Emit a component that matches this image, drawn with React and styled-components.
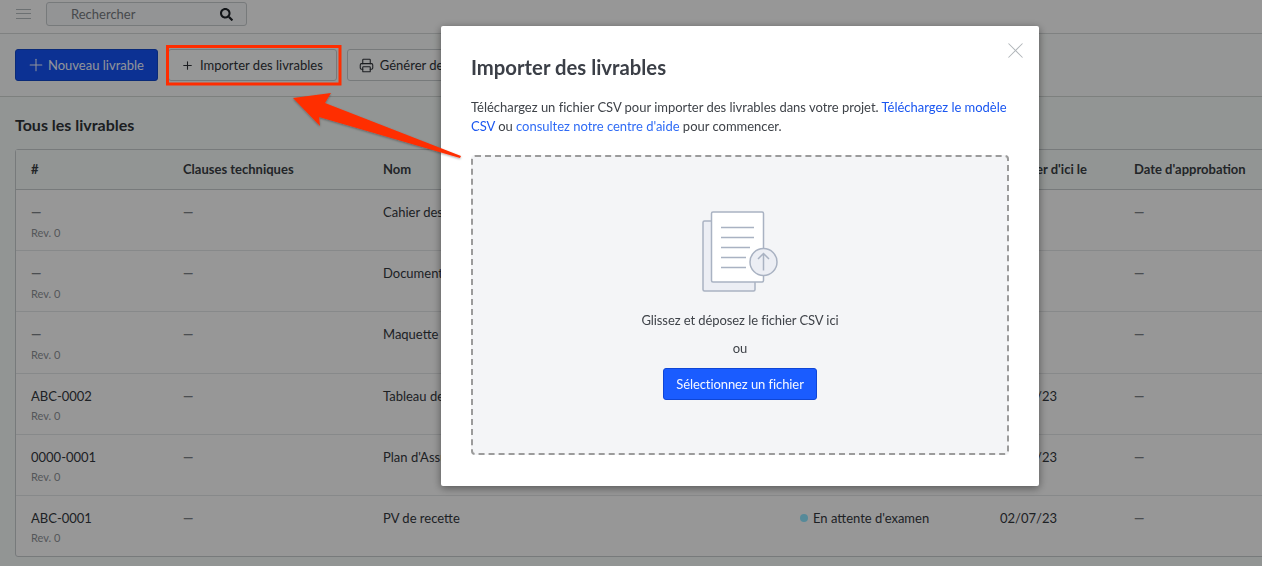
import styled, { createGlobalStyle } from "styled-components";
import { Plus, Printer, X } from "lucide-react";
import { FaSearch } from "react-icons/fa";

const GlobalStyle = createGlobalStyle`
    html, body {
        margin: 0;
        height: 100%;
        overflow: hidden;
        background: #f4f9f7;
    }
    * {
        box-sizing: border-box;
    }
    body {
        font-family: Lato, "Liberation Sans", sans-serif;
        font-size: 13px;
        color: #2f3338;
    }
`;

const Page = styled.div`
    height: 566px;
    overflow: hidden;
`;

const TopBar = styled.header`
    height: 34px;
    display: flex;
    align-items: flex-start;
    gap: 15px;
    padding: 2px 15px 0 16px;
    background: #fcfcfc;
    border-bottom: 1px solid #d4d8d8;
`;

const Burger = styled.div`
    width: 15px;
    height: 10px;
    margin-top: 7px;
    border-top: 1px solid #b5bbbf;
    border-bottom: 1px solid #b5bbbf;
    position: relative;
    &:before {
        content: "";
        position: absolute;
        left: 0;
        right: 0;
        top: 3px;
        border-top: 1px solid #b5bbbf;
    }
`;

const Search = styled.div`
    width: 201px;
    height: 24px;
    display: flex;
    align-items: center;
    justify-content: space-between;
    padding: 0 13px 0 24px;
    border: 1px solid #c6cbce;
    border-radius: 3px;
    background: #f6f7f8;
    color: #757a80;
    font-size: 13px;
    svg {
        color: #1f2328;
    }
`;

const Toolbar = styled.div`
    height: 63px;
    display: flex;
    align-items: center;
    padding: 0 15px;
    background: #f9fbfa;
    border-bottom: 1px solid #d0d5d3;
`;

const Button = styled.button`
    height: 32px;
    display: inline-flex;
    align-items: center;
    flex-shrink: 0;
    gap: ${(p) => p.$gap}px;
    margin-right: ${(p) => p.$after || 0}px;
    padding: 0 13px 0 ${(p) => p.$left}px;
    border-radius: 3px;
    border: 1px solid ${(p) => (p.$primary ? "#1246c9" : "#c6cbce")};
    background: ${(p) => (p.$primary ? "#1452f5" : "#fbfcfc")};
    color: ${(p) => (p.$primary ? "#f2f5ff" : "#2f3338")};
    font-family: inherit;
    font-size: 13px;
    white-space: nowrap;
`;

const Section = styled.section`
    padding: 0 0 0 15px;
`;

const Title = styled.h2`
    margin: 0;
    height: 52px;
    padding-top: 18px;
    font-size: 16px;
    line-height: 20px;
    font-weight: 700;
    color: #2f3338;
`;

const Table = styled.div`
    width: 1320px;
    border: 1px solid #c6cbce;
    border-radius: 3px;
    background: #fcfcfc;
`;

const Row = styled.div`
    display: grid;
    grid-template-columns: 152px 200px 417px 200px 134px 1fr;
    padding-left: 15px;
    height: 61.2px;
    align-items: start;
    border-bottom: 1px solid #e2e4e6;
    &:last-child {
        border-bottom: none;
        height: 60px;
    }
`;

const HeadRow = styled(Row)`
    height: 40px;
    padding-bottom: 2px;
    align-items: center;
    background: #f4f9f7;
    border-bottom-color: #c6cbce;
`;

const HeadCell = styled.div`
    font-weight: 700;
    color: #3a3e44;
    white-space: nowrap;
`;

const Cell = styled.div`
    padding-top: 14px;
    line-height: 16px;
    color: #33373c;
    white-space: nowrap;
`;

const Mark = styled.span`
    font-weight: 700;
    color: #7d8287;
`;

const Rev = styled.div`
    margin-top: 5.5px;
    font-size: 11px;
    line-height: 14px;
    color: #8d9196;
`;

const Status = styled(Cell)`
    display: flex;
    align-items: center;
    gap: 5px;
    &:before {
        content: "";
        width: 8px;
        height: 8px;
        border-radius: 50%;
        background: #90e6ff;
    }
`;

const Backdrop = styled.div`
    position: fixed;
    inset: 0;
    background: rgba(0, 0, 0, 0.4);
`;

const Modal = styled.div`
    position: fixed;
    left: 441px;
    top: 26px;
    width: 598px;
    height: 460px;
    padding: 29px 30px 30px;
    background: #fff;
    border-radius: 2px;
    box-shadow: 0 2px 8px rgba(0, 0, 0, 0.45);
`;

const Close = styled.button`
    position: absolute;
    top: 11px;
    right: 10px;
    padding: 0;
    border: none;
    background: none;
    color: #b0b5b9;
    display: flex;
`;

const ModalTitle = styled.h3`
    margin: 0 0 19px;
    font-size: 20.3px;
    line-height: 24px;
    font-weight: 700;
    color: #3b3f47;
`;

const Intro = styled.p`
    margin: 0 0 19px;
    font-size: 13px;
    line-height: 19px;
    letter-spacing: -0.02px;
    color: #3f4349;
`;

const Link = styled.a`
    color: ${(p) => (p.$light ? "#2f6bf5" : "#1a56f0")};
    text-decoration: none;
`;

const DropZone = styled.div`
    width: 538px;
    height: 300px;
    display: flex;
    flex-direction: column;
    align-items: center;
    padding-top: 54px;
    background: #f4f5f7;
    border: 2px dashed #9b9b9b;
    border-radius: 4px;
    color: #3f4349;
`;

const DropText = styled.div`
    line-height: 16px;
    letter-spacing: -0.08px;
    margin-top: ${(p) => p.$top}px;
`;

const Pick = styled.button`
    margin-top: 12px;
    width: 154px;
    height: 32px;
    border: 1px solid #0f46d6;
    border-radius: 3px;
    background: #1a5cff;
    color: #f4f7ff;
    font-family: inherit;
    font-size: 13px;
    letter-spacing: -0.08px;
`;

const Annotation = styled.svg`
    position: fixed;
    inset: 0;
    pointer-events: none;
`;

const DocIcon = () => (
    <svg width="80" height="84" viewBox="0 0 80 84" fill="none" stroke="#a9b2c2" strokeWidth="1.5">
        <rect x="3" y="10" width="52" height="70" rx="1.5" fill="#eceef4" />
        <rect x="11.5" y="1" width="52" height="70" rx="1.5" fill="#fff" />
        <path d="M21 16.5h33M21 26.5h33M21 36.5h29M21 46.5h25M21 56.5h25" />
        <circle cx="63.5" cy="51" r="13.5" fill="#eceef4" />
        <path d="M63.5 59.5V42.5M58 48l5.5-5.5 5.5 5.5" />
    </svg>
);

const rows = [
    { id: "", name: "Cahier des charges" },
    { id: "", name: "Document de conception" },
    { id: "", name: "Maquette fonctionnelle" },
    { id: "ABC-0002", name: "Tableau de bord", date: "02/07/23" },
    { id: "0000-0001", name: "Plan d'Assurance Qualité", date: "02/07/23" },
    { id: "ABC-0001", name: "PV de recette", date: "02/07/23" },
];

export default function App() {
    return (
        <Page>
            <GlobalStyle />
            <TopBar>
                <Burger />
                <Search>
                    Rechercher
                    <FaSearch size={13} />
                </Search>
            </TopBar>
            <Toolbar>
                <Button $primary $after={10} $left={10} $gap={2}>
                    <Plus size={20} strokeWidth={1.25} />
                    Nouveau livrable
                </Button>
                <Button $after={10} $left={12} $gap={6}>
                    <Plus size={13} strokeWidth={2} />
                    Importer des livrables
                </Button>
                <Button $left={11} $gap={6}>
                    <Printer size={15} strokeWidth={1.75} />
                    Générer des rapports
                </Button>
            </Toolbar>
            <Section>
                <Title>Tous les livrables</Title>
                <Table>
                    <HeadRow>
                        <HeadCell>#</HeadCell>
                        <HeadCell>Clauses techniques</HeadCell>
                        <HeadCell>Nom</HeadCell>
                        <HeadCell>Statut</HeadCell>
                        <HeadCell>À traiter d'ici le</HeadCell>
                        <HeadCell>Date d'approbation</HeadCell>
                    </HeadRow>
                    {rows.map((row, i) => (
                        <Row key={i}>
                            <Cell>
                                {row.id || <Mark>—</Mark>}
                                <Rev>Rev. 0</Rev>
                            </Cell>
                            <Cell><Mark>—</Mark></Cell>
                            <Cell>{row.name}</Cell>
                            <Status>En attente d'examen</Status>
                            <Cell>{row.date || <Mark>—</Mark>}</Cell>
                            <Cell><Mark>—</Mark></Cell>
                        </Row>
                    ))}
                </Table>
            </Section>
            <Backdrop />
            <Modal>
                <Close>
                    <X size={27} strokeWidth={0.9} />
                </Close>
                <ModalTitle>Importer des livrables</ModalTitle>
                <Intro>
                    Téléchargez un fichier CSV pour importer des livrables dans votre projet.{" "}
                    <Link>Téléchargez le modèle CSV</Link> ou <Link $light>consultez notre centre d'aide</Link> pour commencer.
                </Intro>
                <DropZone>
                    <DocIcon />
                    <DropText $top={17}>Glissez et déposez le fichier CSV ici</DropText>
                    <DropText $top={12}>ou</DropText>
                    <Pick>Sélectionnez un fichier</Pick>
                </DropZone>
            </Modal>
            <Annotation width="1262" height="566" viewBox="0 0 1262 566">
                <defs>
                    <filter id="soft" x="-10%" y="-30%" width="120%" height="160%">
                        <feDropShadow dx="0" dy="1" stdDeviation="1.2" floodColor="#000" floodOpacity="0.35" />
                    </filter>
                </defs>
                <rect x="167.5" y="46.5" width="172.5" height="37.5" fill="none" stroke="#ff2d00" strokeWidth="3" />
                <polygon
                    points="293,98 331,93 325,103 461,156 460,158 319,117 320,126"
                    fill="#ff2d00"
                    filter="url(#soft)"
                />
            </Annotation>
        </Page>
    );
}
